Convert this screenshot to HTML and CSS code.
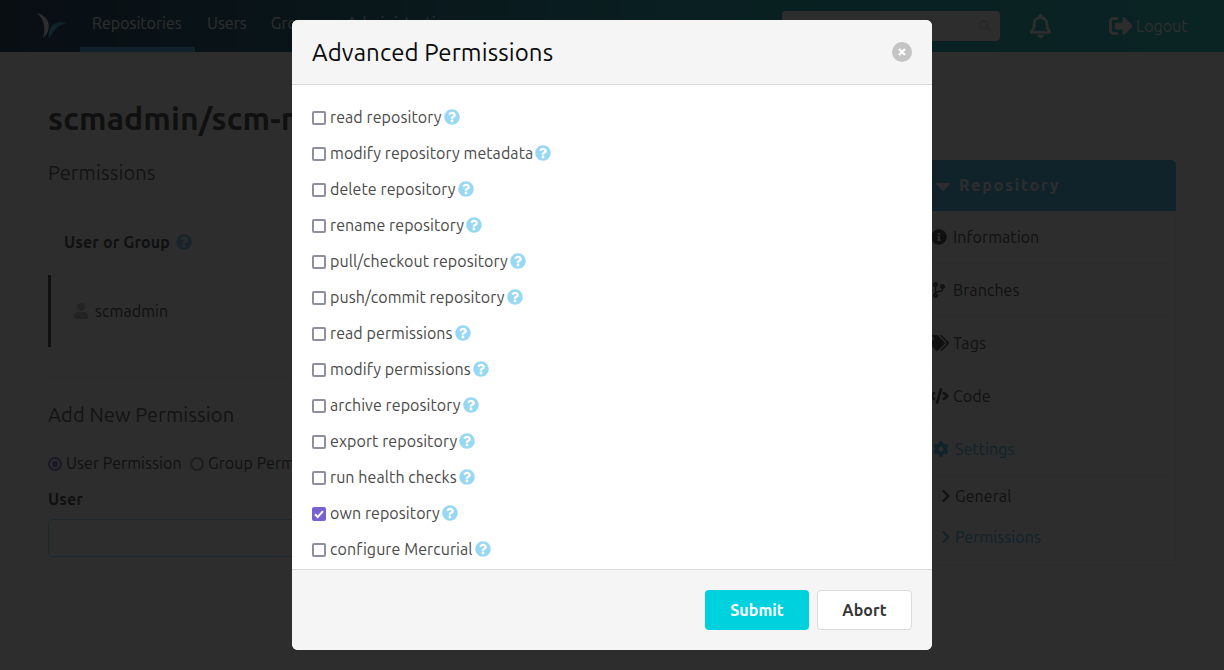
FILE: index.html
```html
<!DOCTYPE html>
<html lang="en">
<head>
<meta charset="utf-8">
<title>Advanced Permissions</title>
<link rel="stylesheet" href="styles.css">
</head>
<body>
<svg class="defs" aria-hidden="true">
  <symbol id="help" viewBox="0 0 512 512"><path d="M504 256c0 136.997-111.043 248-248 248S8 392.997 8 256C8 119.083 119.043 8 256 8s248 111.083 248 248zM262.655 90c-54.497 0-89.255 22.957-116.549 63.758-3.536 5.286-2.353 12.415 2.715 16.258l34.699 26.31c5.205 3.947 12.621 3.008 16.665-2.122 17.864-22.658 30.113-35.797 57.303-35.797 20.429 0 45.698 13.148 45.698 32.958 0 14.976-12.363 22.667-32.534 33.976C247.128 238.528 216 254.941 216 296v4c0 6.627 5.373 12 12 12h56c6.627 0 12-5.373 12-12v-1.333c0-28.462 83.186-29.647 83.186-106.667 0-58.002-60.165-102-116.531-102zM256 338c-25.365 0-46 20.635-46 46 0 25.364 20.635 46 46 46s46-20.636 46-46c0-25.365-20.635-46-46-46z"/></symbol>
  <symbol id="chevron" viewBox="0 0 320 512"><path d="M285.476 272.971L91.132 467.314c-9.373 9.373-24.569 9.373-33.941 0l-22.667-22.667c-9.357-9.357-9.375-24.522-.04-33.901L188.505 256 34.484 101.255c-9.335-9.379-9.317-24.544.04-33.901l22.667-22.667c9.373-9.373 24.569-9.373 33.941 0L285.475 239.03c9.373 9.372 9.373 24.568.001 33.941z"/></symbol>
</svg>
<header class="navbar">
  <svg class="logo" viewBox="0 0 32 28"><path fill="#fff" d="M1 1C10 3 15 11 12 19c-1 3-3 5-5 7C10 16 8 7 1 1z"/><path fill="#33b2e8" d="M13 27C11 15 18 8 32 11c-9 1-14 6-19 16z"/></svg>
  <nav class="tabs">
    <a class="tab active"><span>Repositories</span></a>
    <a class="tab"><span>Users</span></a>
    <a class="tab"><span>Groups</span></a>
    <a class="tab"><span>Administration</span></a>
  </nav>
  <div class="search"><svg viewBox="0 0 512 512"><path d="M505 442.7L405.300 343c-4.500-4.500-10.600-7-17-7H372c27.600-35.300 44-79.700 44-128C416 93.100 322.900 0 208 0S0 93.100 0 208s93.100 208 208 208c48.300 0 92.700-16.400 128-44v16.300c0 6.400 2.500 12.500 7 17l99.700 99.700c9.400 9.400 24.600 9.400 33.900 0l28.300-28.300c9.400-9.400 9.400-24.600.1-34zM208 336c-70.700 0-128-57.200-128-128 0-70.700 57.200-128 128-128 70.700 0 128 57.200 128 128 0 70.700-57.200 128-128 128z"/></svg></div>
  <svg class="bell" viewBox="0 0 448 512"><path d="M439.390 362.290c-19.320-20.760-55.470-51.990-55.470-154.290 0-77.700-54.480-139.900-127.940-155.160V32c0-17.670-14.320-32-31.980-32s-31.980 14.330-31.980 32v20.840C118.560 68.100 64.080 130.300 64.080 208c0 102.300-36.150 133.530-55.470 154.290-6 6.450-8.660 14.160-8.610 21.710.11 16.400 12.980 32 32.100 32h383.800c19.120 0 32-15.600 32.100-32 .05-7.550-2.610-15.270-8.610-21.710zM67.530 368c21.220-27.970 44.420-74.330 44.530-159.420 0-.2-.06-.38-.06-.58 0-61.860 50.140-112 112-112s112 50.140 112 112c0 .2-.06.38-.06.58.11 85.100 23.310 131.460 44.530 159.420H67.530zM224 512c35.320 0 63.970-28.650 63.970-64H160.030c0 35.350 28.650 64 63.970 64z"/></svg>
  <a class="logout"><svg viewBox="0 0 512 512"><path d="M497 273L329 441c-15 15-41 4.500-41-17v-96H152c-13.300 0-24-10.700-24-24v-96c0-13.300 10.700-24 24-24h136V88c0-21.400 25.900-32 41-17l168 168c9.300 9.400 9.300 24.600 0 34zM192 436v-40c0-6.600-5.400-12-12-12H96c-17.700 0-32-14.300-32-32V160c0-17.700 14.300-32 32-32h84c6.600 0 12-5.400 12-12V76c0-6.600-5.400-12-12-12H96c-53 0-96 43-96 96v192c0 53 43 96 96 96h84c6.600 0 12-5.400 12-12z"/></svg><span>Logout</span></a>
</header>

<div class="page">
  <main class="content">
    <h1>scmadmin/scm-manager</h1>
    <h2 class="sub-permissions">Permissions</h2>
    <div class="table-head"><span>User or Group</span><svg class="help"><use href="#help"/></svg></div>
    <div class="table-row"><svg viewBox="0 0 448 512"><path d="M224 256c70.700 0 128-57.300 128-128S294.700 0 224 0 96 57.300 96 128s57.300 128 128 128zm89.600 32h-16.700c-22.200 10.200-46.900 16-72.900 16s-50.600-5.800-72.900-16h-16.700C60.200 288 0 348.200 0 422.400V464c0 26.500 21.500 48 48 48h352c26.500 0 48-21.500 48-48v-41.600c0-74.200-60.200-134.400-134.400-134.400z"/></svg><span>scmadmin</span></div>
    <hr>
    <h2>Add New Permission</h2>
    <div class="radios"><i class="radio on"></i><span class="r-user">User Permission</span><i class="radio"></i><span>Group Permission</span></div>
    <label class="field-label">User</label>
    <div class="input"></div>
  </main>
  <aside class="menu">
    <div class="menu-head"><svg class="caret" viewBox="0 0 14 8"><path d="M.8 0h12.400q1.200.2.400 1.200L7.800 7.500q-.8.800-1.600 0L.4 1.200Q-.4.200.8 0z"/></svg><span>Repository</span></div>
    <a class="item"><svg viewBox="0 0 512 512"><path d="M256 8C119.043 8 8 119.083 8 256c0 136.997 111.043 248 248 248s248-111.003 248-248C504 119.083 392.957 8 256 8zm0 110c23.196 0 42 18.804 42 42s-18.804 42-42 42-42-18.804-42-42 18.804-42 42-42zm56 254c0 6.627-5.373 12-12 12h-88c-6.627 0-12-5.373-12-12v-24c0-6.627 5.373-12 12-12h12v-64h-12c-6.627 0-12-5.373-12-12v-24c0-6.627 5.373-12 12-12h64c6.627 0 12 5.373 12 12v100h12c6.627 0 12 5.373 12 12v24z"/></svg><span>Information</span></a>
    <a class="item"><svg viewBox="-64 0 512 512"><path d="M384 144c0-44.200-35.800-80-80-80s-80 35.800-80 80c0 36.400 24.300 67.100 57.500 76.800-.6 16.100-4.200 28.500-11 36.900-15.400 19.200-49.300 22.400-85.200 25.700-28.200 2.600-57.400 5.400-81.300 16.900v-144c32.500-10.200 56-40.500 56-76.300 0-44.200-35.800-80-80-80S0 35.800 0 80c0 35.800 23.500 66.100 56 76.300v199.300C23.500 365.900 0 396.200 0 432c0 44.200 35.800 80 80 80s80-35.800 80-80c0-34-21.200-63.100-51.200-74.600 3.100-5.200 7.800-9.800 14.900-13.400 16.200-8.200 40.400-10.400 66.100-12.800 42.200-3.900 90-8.400 118.200-43.400 14-17.400 21.100-39.800 21.600-67.900 31.600-10.800 54.400-40.700 54.400-75.900zM80 64c8.800 0 16 7.200 16 16s-7.200 16-16 16-16-7.200-16-16 7.200-16 16-16zm0 384c-8.800 0-16-7.200-16-16s7.200-16 16-16 16 7.200 16 16-7.200 16-16 16zm224-320c8.800 0 16 7.200 16 16s-7.200 16-16 16-16-7.200-16-16 7.200-16 16-16z"/></svg><span>Branches</span></a>
    <a class="item"><svg class="wide" viewBox="0 0 640 512"><path d="M497.941 225.941L286.059 14.059A48 48 0 0 0 252.118 0H48C21.490 0 0 21.490 0 48v204.118a48 48 0 0 0 14.059 33.941l211.882 211.882c18.744 18.745 49.136 18.746 67.882 0l204.118-204.118c18.745-18.745 18.745-49.137 0-67.882zM112 160c-26.510 0-48-21.490-48-48s21.490-48 48-48 48 21.490 48 48-21.490 48-48 48zm513.941 133.823L421.823 497.941c-18.745 18.745-49.137 18.745-67.882 0l-.36-.36L527.640 323.522c16.999-16.999 26.360-39.600 26.360-63.640s-9.362-46.641-26.360-63.640L331.397 0h48.721a48 48 0 0 1 33.941 14.059l211.882 211.882c18.745 18.745 18.745 49.137 0 67.882z"/></svg><span>Tags</span></a>
    <a class="item"><svg class="wide" viewBox="0 0 640 512"><path d="M278.900 511.500l-61-17.700c-6.400-1.800-10-8.500-8.200-14.900L346.200 8.700c1.800-6.400 8.500-10 14.900-8.200l61 17.700c6.400 1.800 10 8.500 8.200 14.900L293.800 503.300c-1.900 6.400-8.500 10.100-14.900 8.200zm-114-112.200l43.500-46.400c4.600-4.900 4.300-12.700-.8-17.200L117 256l90.600-79.700c5.100-4.500 5.500-12.300.8-17.200l-43.500-46.400c-4.500-4.800-12.100-5.100-17-.5L3.800 247.200c-5.100 4.700-5.100 12.800 0 17.500l144.100 135.100c4.900 4.600 12.500 4.400 17-.5zm327.200.6l144.100-135.100c5.100-4.700 5.100-12.800 0-17.500L492.100 112.100c-4.800-4.500-12.400-4.300-17 .5L431.600 159c-4.600 4.900-4.300 12.700.8 17.200L523 256l-90.600 79.700c-5.100 4.500-5.500 12.300-.8 17.200l43.500 46.400c4.500 4.900 12.100 5.100 17 .6z"/></svg><span>Code</span></a>
    <a class="item current"><svg viewBox="0 0 512 512"><path d="M487.400 315.700l-42.600-24.600c4.300-23.200 4.300-47 0-70.200l42.600-24.600c4.900-2.800 7.100-8.600 5.500-14-11.100-35.600-30-67.800-54.700-94.600-3.800-4.100-10-5.100-14.800-2.300L380.800 110c-17.900-15.400-38.500-27.300-60.800-35.100V25.800c0-5.600-3.900-10.500-9.400-11.700-36.700-8.200-74.300-7.800-109.200 0-5.500 1.200-9.400 6.100-9.400 11.700V75c-22.200 7.900-42.800 19.800-60.800 35.100L88.700 85.500c-4.900-2.800-11-1.900-14.800 2.300-24.700 26.700-43.600 58.900-54.700 94.600-1.700 5.400.6 11.200 5.500 14L67.300 221c-4.300 23.200-4.300 47 0 70.200l-42.600 24.600c-4.900 2.800-7.100 8.600-5.500 14 11.100 35.600 30 67.800 54.700 94.600 3.800 4.100 10 5.100 14.800 2.300l42.600-24.600c17.900 15.400 38.500 27.300 60.800 35.100v49.200c0 5.600 3.900 10.500 9.400 11.700 36.700 8.200 74.300 7.800 109.200 0 5.500-1.200 9.400-6.100 9.400-11.700v-49.200c22.200-7.900 42.800-19.800 60.800-35.100l42.600 24.600c4.900 2.800 11 1.900 14.800-2.300 24.700-26.700 43.600-58.900 54.700-94.600 1.500-5.500-.7-11.300-5.600-14.100zM256 336c-44.100 0-80-35.900-80-80s35.900-80 80-80 80 35.900 80 80-35.900 80-80 80z"/></svg><span>Settings</span></a>
    <div class="submenu">
      <a class="subitem"><svg><use href="#chevron"/></svg><span>General</span></a>
      <a class="subitem current"><svg><use href="#chevron"/></svg><span>Permissions</span></a>
    </div>
  </aside>
</div>

<div class="overlay">
  <section class="modal">
    <header class="modal-head"><h3>Advanced Permissions</h3><svg class="close" viewBox="0 0 20 20"><circle cx="10" cy="10" r="10"/><path d="M7 7l6 6M13 7l-6 6"/></svg></header>
    <div class="modal-body">
      <div class="perm"><i class="box"></i><span>read repository</span><svg class="help"><use href="#help"/></svg></div>
      <div class="perm"><i class="box"></i><span>modify repository metadata</span><svg class="help"><use href="#help"/></svg></div>
      <div class="perm"><i class="box"></i><span>delete repository</span><svg class="help"><use href="#help"/></svg></div>
      <div class="perm"><i class="box"></i><span>rename repository</span><svg class="help"><use href="#help"/></svg></div>
      <div class="perm"><i class="box"></i><span>pull/checkout repository</span><svg class="help"><use href="#help"/></svg></div>
      <div class="perm"><i class="box"></i><span>push/commit repository</span><svg class="help"><use href="#help"/></svg></div>
      <div class="perm"><i class="box"></i><span>read permissions</span><svg class="help"><use href="#help"/></svg></div>
      <div class="perm"><i class="box"></i><span>modify permissions</span><svg class="help"><use href="#help"/></svg></div>
      <div class="perm"><i class="box"></i><span>archive repository</span><svg class="help"><use href="#help"/></svg></div>
      <div class="perm"><i class="box"></i><span>export repository</span><svg class="help"><use href="#help"/></svg></div>
      <div class="perm"><i class="box"></i><span>run health checks</span><svg class="help"><use href="#help"/></svg></div>
      <div class="perm"><i class="box checked"><svg viewBox="0 0 14 14"><path d="M3 7.300l2.700 2.700L11 4.200"/></svg></i><span>own repository</span><svg class="help"><use href="#help"/></svg></div>
      <div class="perm"><i class="box"></i><span>configure Mercurial</span><svg class="help"><use href="#help"/></svg></div>
    </div>
    <footer class="modal-foot"><button class="btn submit">Submit</button><button class="btn abort">Abort</button></footer>
  </section>
</div>
</body>
</html>
```

FILE: styles.css
```css
* { box-sizing: border-box; }
body { margin: 0; height: 670px; overflow: hidden; background: #fff; color: #363636; font: 16px/24px Ubuntu, "Noto Sans", sans-serif; letter-spacing: .08px; }
h1, h2, h3 { margin: 0; font-weight: 400; }
span { white-space: nowrap; }
svg { fill: currentColor; flex: none; display: block; }
.defs { position: absolute; width: 0; height: 0; }
.help { width: 16px; height: 16px; color: #98d8f3; }

.navbar { height: 52px; padding-left: 36px; display: flex; align-items: center; color: #fff; background: linear-gradient(90deg, #00264a 0%, #005570 25%, #009ca8 55%, #0cb8b8 100%); }
.logo { width: 32px; height: 28px; margin-right: 12px; }
.tabs { display: flex; height: 52px; width: 702px; letter-spacing: 0; }
.tab { padding: 11px 12px 0; border-bottom: 5px solid transparent; }
.tab.active { border-color: #33b2e8; width: 115px; }
.tab + .tab + .tab { letter-spacing: .08px; }
.search { width: 218px; height: 30px; background: #fff; border-radius: 4px; display: flex; align-items: center; justify-content: flex-end; padding-right: 9px; color: #dbdbdb; }
.search svg { width: 12px; height: 12px; }
.bell { width: 21px; height: 24px; margin-left: 30px; stroke: #fff; stroke-width: 10; }
.logout { display: flex; align-items: center; gap: 3px; margin-left: 58px; letter-spacing: 0; }
.logout svg { width: 24px; height: 24px; }

.page { display: flex; gap: 24px; padding: 0 48px; }
.content { width: 840px; padding-top: 48px; }
h1 { font-size: 32px; line-height: 36px; font-weight: 700; white-space: nowrap; }
h2 { font-size: 20px; line-height: 25px; color: #4a4a4a; letter-spacing: .12px; }
.sub-permissions { margin-top: 24px; }
.table-head { display: flex; align-items: center; gap: 6px; padding-left: 16px; margin-top: 45px; font-weight: 700; letter-spacing: .12px; }
.table-head .help { color: #33b2e8; opacity: .7; }
.table-row { display: flex; align-items: center; gap: 7px; height: 72px; margin-top: 21px; padding-left: 23px; border-left: 3px solid #363636; background: #fafafa; }
.table-row svg { width: 14px; height: 16px; color: #b5b5b5; }
hr { height: 2px; margin: 29px 0 24px; border: 0; background: #f5f5f5; }
.radios { display: flex; align-items: center; gap: 4px; margin-top: 24px; }
.radio { width: 14px; height: 14px; border: 2px solid #8f8f9d; border-radius: 50%; margin-top: 1px; flex: none; }
.radio.on { border-color: #7761d1; background: radial-gradient(circle, #7761d1 0 3px, transparent 3.500px); }
.r-user { width: 120px; }
.field-label { display: block; font-weight: 700; margin-top: 12px; }
.input { height: 38px; margin-top: 8px; border: 1px solid #98d8f3; border-radius: 4px; }

.menu { width: 264px; padding-top: 108px; }
.menu-head { height: 51px; display: flex; align-items: center; gap: 9px; padding: 0 0 2px 24px; background: #33b2e8; border-radius: 5px 5px 0 0; color: #fff; font-weight: 700; letter-spacing: 1.900px; }
.caret { width: 14px; height: 8px; margin-top: 5px; }
.item { height: 53px; display: flex; align-items: center; gap: 6px; padding-left: 18px; border: 1px solid #f0f0f0; border-top: 0; }
.item svg { width: 16px; height: 16px; }
.item svg.wide { width: 20px; margin: 0 -2px; }
.item.current { padding-left: 20px; }
.current { color: #33b2e8; }
.submenu { margin-top: -1px; padding: 0 0 8px 28px; border: 1px solid #f0f0f0; border-top: 0; }
.subitem { height: 41px; display: flex; align-items: center; gap: 4px; }
.subitem svg { width: 10px; height: 14px; }

.overlay { position: fixed; inset: 0; display: flex; align-items: center; justify-content: center; background: rgba(10, 10, 10, .86); }
.modal { width: 640px; height: 630px; display: flex; flex-direction: column; border-radius: 6px; overflow: hidden; background: #fff; }
.modal-head { height: 65px; padding: 0 20px; display: flex; align-items: center; justify-content: space-between; background: #f5f5f5; border-bottom: 1px solid #dbdbdb; }
h3 { font-size: 24px; line-height: 24px; color: #0a0a0a; padding-top: 2px; letter-spacing: .12px; }
.close { width: 20px; height: 20px; color: #c4c4c4; stroke-width: 2.200; }
.close path { stroke: #fff; }
.modal-body { flex: 1; padding: 14px 20px 0; color: #4a4a4a; overflow: hidden; }
.perm { height: 36px; display: flex; align-items: center; }
.perm .help { margin-left: 2px; }
.box { width: 14px; height: 14px; margin: 2px 4px 0 0; border: 2px solid #8f8f9d; border-radius: 2px; flex: none; }
.box.checked { border: 0; background: #7761d1; }
.box svg { width: 14px; height: 14px; fill: none; stroke: #fff; stroke-width: 2; }
.modal-foot { height: 81px; padding: 20px; display: flex; gap: 8px; justify-content: flex-end; background: #f5f5f5; border-top: 1px solid #dbdbdb; }
.btn { height: 40px; padding: 0; border: 1px solid #dbdbdb; border-radius: 4px; background: #fff; color: #363636; font: 700 16px/24px Ubuntu, "Noto Sans", sans-serif; letter-spacing: .08px; }
.submit { width: 104px; border: 0; background: #00d1df; color: #fff; }
.abort { width: 95px; }
```
